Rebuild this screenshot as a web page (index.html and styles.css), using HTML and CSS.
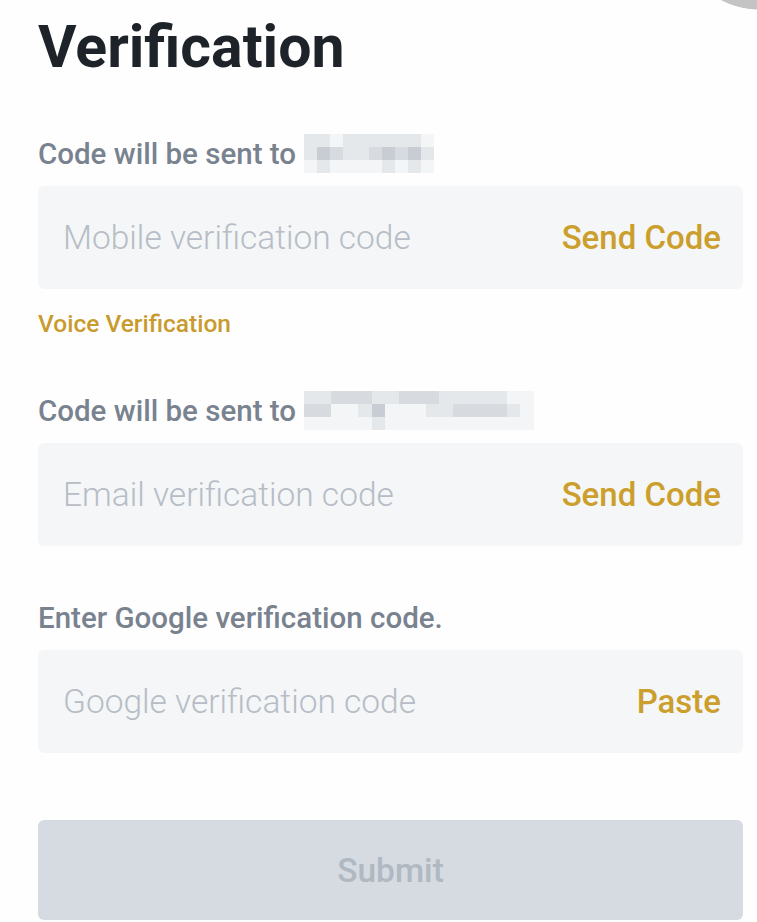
FILE: index.html
```html
<!DOCTYPE html>
<html lang="en">

<head>
    <meta charset="UTF-8">
    <meta name="viewport" content="width=device-width, initial-scale=1.0">
    <title>Verification</title>
    <link rel="stylesheet" href="styles.css">
</head>

<body>
    <div class="corner-dot"></div>

    <main class="page">
        <h1 class="title">Verification</h1>

        <!-- 手機驗證 -->
        <section class="field field-first">
            <div class="field-label">
                <span>Code will be sent to</span>
                <span class="mosaic cols-10">
                    <i class="m1"></i><i class="m1"></i><i class="m0"></i><i class="m1"></i><i class="m1"></i><i class="m1"></i><i class="m1"></i><i class="m1"></i><i class="m1"></i><i class="m0"></i>
                    <i class="m1"></i><i class="m3"></i><i class="m2"></i><i class="m1"></i><i class="m1"></i><i class="m2"></i><i class="m3"></i><i class="m2"></i><i class="m3"></i><i class="m1"></i>
                    <i class="m0"></i><i class="m1"></i><i class="m0"></i><i class="m0"></i><i class="m0"></i><i class="m0"></i><i class="m1"></i><i class="m0"></i><i class="m1"></i><i class="m0"></i>
                </span>
            </div>
            <div class="input-box">
                <input type="text" placeholder="Mobile verification code">
                <button class="link-btn">Send Code</button>
            </div>
            <a class="voice-link" href="#">Voice Verification</a>
        </section>

        <!-- 郵件驗證 -->
        <section class="field">
            <div class="field-label">
                <span>Code will be sent to</span>
                <span class="mosaic cols-17">
                    <i class="m1"></i><i class="m1"></i><i class="m2"></i><i class="m2"></i><i class="m2"></i><i class="m1"></i><i class="m1"></i><i class="m2"></i><i class="m2"></i><i class="m2"></i><i class="m1"></i><i class="m1"></i><i class="m1"></i><i class="m1"></i><i class="m1"></i><i class="m0"></i><i class="m0"></i>
                    <i class="m2"></i><i class="m2"></i><i class="m0"></i><i class="m0"></i><i class="m1"></i><i class="m3"></i><i class="m0"></i><i class="m0"></i><i class="m0"></i><i class="m1"></i><i class="m1"></i><i class="m2"></i><i class="m2"></i><i class="m2"></i><i class="m2"></i><i class="m1"></i><i class="m0"></i>
                    <i class="m0"></i><i class="m0"></i><i class="m0"></i><i class="m0"></i><i class="m0"></i><i class="m1"></i><i class="m0"></i><i class="m0"></i><i class="m0"></i><i class="m0"></i><i class="m0"></i><i class="m0"></i><i class="m0"></i><i class="m0"></i><i class="m0"></i><i class="m0"></i><i class="m0"></i>
                </span>
            </div>
            <div class="input-box">
                <input type="text" placeholder="Email verification code">
                <button class="link-btn">Send Code</button>
            </div>
        </section>

        <!-- Google 驗證 -->
        <section class="field">
            <div class="field-label">
                <span>Enter Google verification code.</span>
            </div>
            <div class="input-box">
                <input type="text" placeholder="Google verification code">
                <button class="link-btn">Paste</button>
            </div>
        </section>

        <button class="submit-btn" disabled>Submit</button>
    </main>
</body>

</html>
```

FILE: styles.css
```css
body {
    font-family: 'Roboto', 'Liberation Sans', sans-serif;
    margin: 0;
    padding: 0;
    background: #fefefe;
    color: #1e2329;
    overflow: hidden;
}

/* 右上角露出的圓形 */
.corner-dot {
    position: absolute;
    top: 0;
    right: 0;
    width: 40px;
    height: 12px;
    background: radial-gradient(circle 85px at 43px -75px, #c4c4c4 99%, transparent 100%);
}

.page {
    padding: 11px 14px 0 38px;
}

.title {
    margin: 0;
    font-size: 59px;
    line-height: 71px;
    font-weight: 700;
    color: #1e2329;
}

.field {
    margin-top: 54px;
}

.field-label {
    display: flex;
    align-items: center;
    height: 36px;
    font-size: 29.5px;
    font-weight: 500;
    color: #79828f;
}

/* 打碼區塊 */
.mosaic {
    display: inline-grid;
    grid-auto-rows: 13px;
    margin-left: 8px;
    margin-top: -2px;
}

.mosaic.cols-10 {
    grid-template-columns: repeat(10, 13px);
}

.mosaic.cols-17 {
    grid-template-columns: repeat(17, 13.5px);
}

.mosaic i {
    display: block;
}

.m0 { background: #f4f5f7; }
.m1 { background: #e5e8eb; }
.m2 { background: #d7dbdf; }
.m3 { background: #c8cdd3; }

.input-box {
    display: flex;
    align-items: center;
    height: 103px;
    margin-top: 14px;
    padding: 0 22px 0 25px;
    background: #f4f6f7;
    border-radius: 6px;
}

.input-box input {
    flex: 1;
    min-width: 0;
    border: none;
    outline: none;
    background: transparent;
    font-family: inherit;
    font-size: 33.5px;
    font-weight: 300;
    color: #1e2329;
    padding: 0;
}

.input-box input::placeholder {
    color: #b7bdc6;
}

.link-btn {
    border: none;
    background: none;
    padding: 0;
    font-family: inherit;
    font-size: 33px;
    font-weight: 500;
    color: #cc9e2c;
    cursor: pointer;
}

.voice-link {
    display: block;
    margin-top: 20px;
    line-height: 30px;
    font-size: 24.5px;
    font-weight: 500;
    color: #c99b2e;
    text-decoration: none;
}

.submit-btn {
    display: block;
    width: 100%;
    height: 100px;
    margin-top: 67px;
    border: none;
    border-radius: 6px;
    background: #d5dbe1;
    font-family: inherit;
    font-size: 33.5px;
    font-weight: 500;
    color: #b0b8c1;
}
```
